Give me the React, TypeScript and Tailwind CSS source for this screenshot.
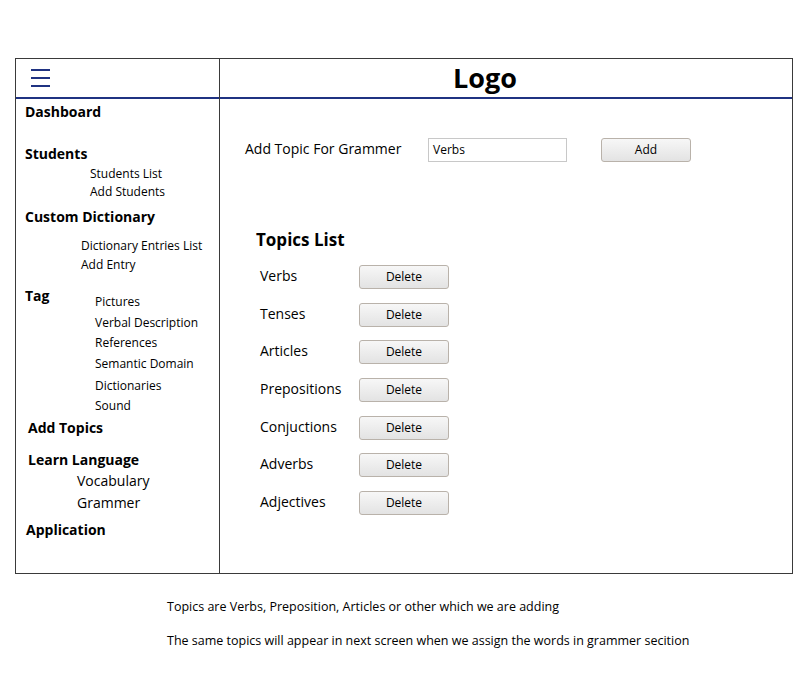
import React from 'react'

const FONT = { fontFamily: '"Open Sans", "Noto Sans", sans-serif' }

const TOPICS = ['Verbs', 'Tenses', 'Articles', 'Prepositions', 'Conjuctions', 'Adverbs', 'Adjectives']

const TAG_ITEMS = [
  { label: 'Pictures', cls: 'mt-0' },
  { label: 'Verbal Description', cls: 'mt-[5px]' },
  { label: 'References', cls: 'mt-[4px]' },
  { label: 'Semantic Domain', cls: 'mt-[5px]' },
  { label: 'Dictionaries', cls: 'mt-[6px]' },
  { label: 'Sound', cls: 'mt-[4px]' },
]

function Btn({ children, className = '' }: { children: React.ReactNode; className?: string }) {
  return (
    <button
      className={`h-[24px] w-[90px] rounded-[3px] border border-[#b9b2aa] bg-gradient-to-b from-[#f7f7f7] to-[#e3e3e3] text-[12px] text-black ${className}`}
    >
      {children}
    </button>
  )
}

function Head({ children, className = '' }: { children: React.ReactNode; className?: string }) {
  return <div className={`text-[14px] font-bold leading-[19px] text-black ${className}`}>{children}</div>
}

function Sub({ children, className = '' }: { children: React.ReactNode; className?: string }) {
  return <div className={`text-[12px] leading-[16px] text-black ${className}`}>{children}</div>
}

export default function App() {
  return (
    <div className="w-[800px] h-[700px] bg-white pt-[58px]" style={FONT}>
      <div className="ml-[15px] w-[778px] h-[516px] border border-[#3a3a3a] flex">
        {/* sidebar */}
        <div className="w-[204px] shrink-0 border-r border-[#3a3a3a] flex flex-col">
          <div className="h-[40px] border-b-2 border-[#1f3282] flex items-center pl-[15px]">
            <div className="flex flex-col gap-[6px] w-[19px]">
              <span className="h-[2px] bg-[#1f3282]" />
              <span className="h-[2px] bg-[#1f3282]" />
              <span className="h-[2px] bg-[#1f3282]" />
            </div>
          </div>
          <div className="pt-[3px]">
            <Head className="pl-[9px]">Dashboard</Head>
            <Head className="pl-[9px] mt-[23px]">Students</Head>
            <Sub className="pl-[74px] mt-[3px]">Students List</Sub>
            <Sub className="pl-[74px] mt-[2px]">Add Students</Sub>
            <Head className="pl-[9px] mt-[7px]">Custom Dictionary</Head>
            <Sub className="pl-[65px] mt-[12px]">Dictionary Entries List</Sub>
            <Sub className="pl-[65px] mt-[3px]">Add Entry</Sub>
            <div className="flex mt-[13px]">
              <Head className="pl-[9px] w-[79px]">Tag</Head>
              <div className="pt-[8px]">
                {TAG_ITEMS.map(t => (
                  <Sub key={t.label} className={t.cls}>{t.label}</Sub>
                ))}
              </div>
            </div>
            <Head className="pl-[12px] mt-[4px]">Add Topics</Head>
            <Head className="pl-[12px] mt-[13px]">Learn Language</Head>
            <div className="pl-[61px] mt-[2px] text-[14px] leading-[19px]">Vocabulary</div>
            <div className="pl-[61px] mt-[3px] text-[14px] leading-[19px]">Grammer</div>
            <Head className="pl-[10px] mt-[8px]">Application</Head>
          </div>
        </div>

        {/* main */}
        <div className="flex-1 flex flex-col">
          <div className="h-[40px] border-b-2 border-[#1f3282] flex items-center justify-center pr-[42px]">
            <span className="text-[27px] font-bold leading-none text-black -mt-[2px]">Logo</span>
          </div>

          <div className="flex items-center mt-[39px] pl-[25px]">
            <span className="w-[183px] text-[14px] text-black -mt-[3px]">Add Topic For Grammer</span>
            <div className="w-[139px] h-[24px] border border-[#c8c8c8] flex items-center px-[4px] text-[12px] text-black">
              Verbs
            </div>
            <Btn className="ml-[34px] h-[23px]">Add</Btn>
          </div>

          <div className="pl-[36px] mt-[66px] text-[17px] font-bold leading-[23px] text-black">Topics List</div>

          <div className="flex flex-col gap-[13.7px] mt-[14px] pl-[40px]">
            {TOPICS.map(t => (
              <div key={t} className="flex items-center h-[24px]">
                <span className="w-[99px] text-[14px] text-black -mt-[3px]">{t}</span>
                <Btn>Delete</Btn>
              </div>
            ))}
          </div>
        </div>
      </div>

      <div className="pl-[167px] mt-[24px] text-[12.5px] leading-[17px] text-black">
        Topics are Verbs, Preposition, Articles or other which we are adding
      </div>
      <div className="pl-[167px] mt-[17px] text-[12.5px] leading-[17px] text-black">
        The same topics will appear in next screen when we assign the words in grammer secition
      </div>
    </div>
  )
}
